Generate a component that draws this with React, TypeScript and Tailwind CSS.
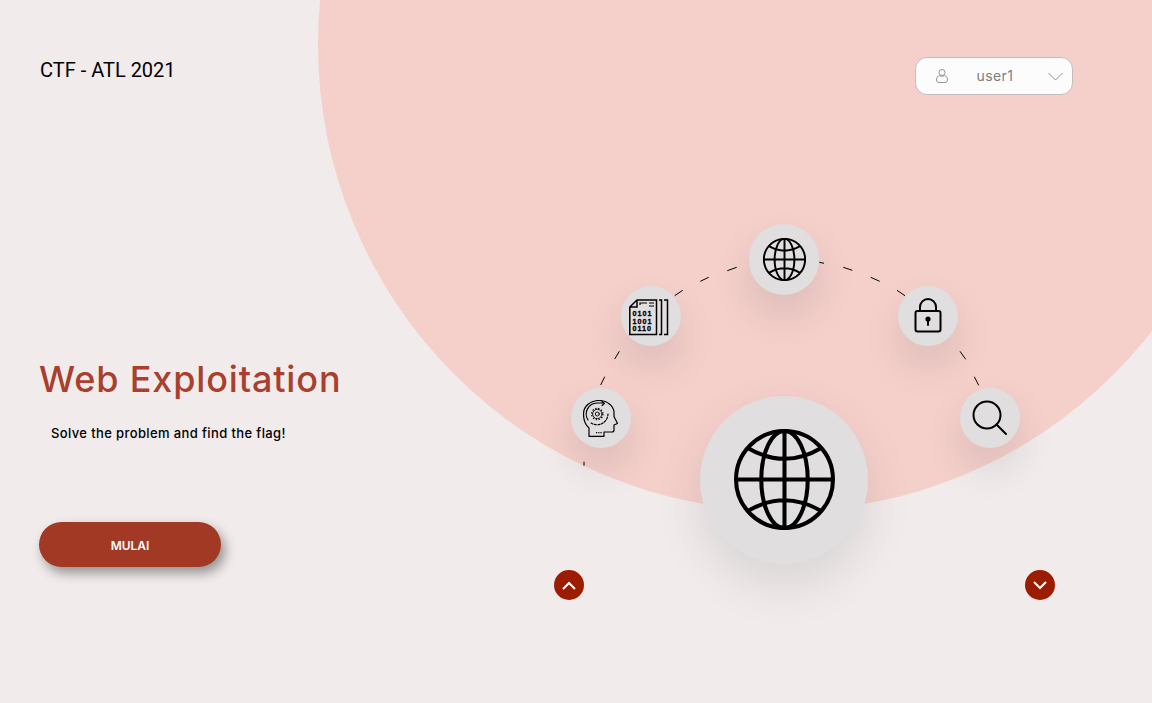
import React from "react";

const Globe = ({ size, sw }: { size: number; sw: number }) => (
  <svg width={size} height={size} viewBox="0 0 100 100" fill="none" stroke="#000" strokeWidth={sw}>
    <circle cx="50" cy="50" r="48" />
    <ellipse cx="50" cy="50" rx="23" ry="48" />
    <path d="M50 2V98M2 50H98M14 19Q50 40 86 19M14 81Q50 60 86 81" />
  </svg>
);

const Lock = () => (
  <svg className="mb-[3px]" width="28" height="36" viewBox="0 0 28 36" fill="none" stroke="#000" strokeWidth="2" strokeLinecap="round" strokeLinejoin="round">
    <rect x="1.500" y="14" width="25" height="20.500" rx="2" />
    <path d="M6 14V10a8 8 0 0 1 16 0V14" />
    <circle cx="14" cy="22" r="1.600" fill="#000" />
    <path d="M14 23V28" />
  </svg>
);

const Search = () => (
  <svg width="36" height="36" viewBox="0 0 36 36" fill="none" stroke="#000" strokeWidth="2" strokeLinecap="round">
    <circle cx="15" cy="15" r="13.500" />
    <path d="M24.500 24.500L34 34" />
  </svg>
);

const Doc = () => (
  <svg className="mr-[5px] mt-[2px]" width="40" height="37" viewBox="0 0 40 37" fill="none" stroke="#000" strokeWidth="1.500">
    <path d="M8 1H27.500V35.500H.800V8Z M8 1V8H.800" />
    <path d="M11 6V4H18M20 4H25M20 7H25" strokeWidth="1.200" />
    <path d="M30 1H32.500V35.500H30M35 1H38.500V35.500H35" />
    <g fill="#000" stroke="#000" strokeWidth="0.300" fontFamily="Liberation Sans, sans-serif" fontSize="7.200" fontWeight="700" letterSpacing="1">
      <text x="3.500" y="17">0101</text>
      <text x="3.500" y="24.600">1001</text>
      <text x="3.500" y="32.200">0110</text>
    </g>
  </svg>
);

const Head = () => (
  <svg width="36" height="37" viewBox="0 0 36 37" fill="none" stroke="#000" strokeWidth="1.200" strokeLinecap="round" strokeLinejoin="round">
    <path d="M6 36.300V28C2.500 25 .500 20 .500 14 .500 6 7.500 .500 16 .500c8 0 14 5 15 11v5l3.500 7-3.500 1.500v5c0 1.500-.7 2-2 2H21v4.300Z" />
    <path d="M5 20A11 11 0 0 1 14 3H21M19 1.500L21.500 3.500 19 5.500" />
    <circle cx="14.300" cy="14" r="2" strokeWidth="0.900" />
    <circle cx="14.300" cy="14" r="4.700" strokeWidth="0.900" />
    <circle cx="14.300" cy="14" r="5.700" strokeDasharray="1.400 1.600" strokeWidth="1.100" strokeLinecap="butt" />
    <path d="M25 14A11 11 0 0 1 8 23" strokeDasharray="2 1.500" />
    <path d="M13 32.700H19.500" strokeDasharray="1.200 1" strokeLinecap="butt" />
  </svg>
);

const Node = ({ x, y, d, children, big }: { x: number; y: number; d: number; children: React.ReactNode; big?: boolean }) => (
  <div
    className={`absolute flex items-center justify-center rounded-full bg-[#e0dede] ${big ? "shadow-[0_20px_50px_rgba(0,0,0,0.1)]" : "shadow-[0_20px_40px_rgba(0,0,0,0.11)]"}`}
    style={{ left: x - d / 2, top: y - d / 2, width: d, height: d }}
  >
    {children}
  </div>
);

const dashes = [
  [584, 461.700, 584, 465.700],
  [600.700, 385, 604.700, 376.700],
  [614.700, 359, 619.300, 351.300],
  [674.700, 295.700, 682.700, 290.300],
  [700.300, 281.300, 708.700, 277.300],
  [727.300, 270.700, 736.700, 267.300],
  [819.300, 262.300, 824, 263.300],
  [843.300, 267.300, 852.300, 270.300],
  [870.700, 277.300, 879.700, 281.300],
  [897, 290.300, 905, 295.700],
  [960, 351.300, 965.700, 359.300],
  [974.300, 376.700, 978.700, 385.300],
];

export default function App() {
  return (
    <div className="relative h-[703px] w-[1152px] overflow-hidden bg-[#f1ebeb] font-['Inter',sans-serif]">
      <div className="absolute left-[318px] top-[-421px] h-[932px] w-[932px] rounded-full bg-[#f5d0cb]" />

      <div className="relative z-10 flex h-full">
        <div className="flex w-[400px] flex-col pl-[39px]">
          <h1 className="mt-[58px] pl-px font-['Roboto',sans-serif] text-[20px] leading-6 text-black">CTF - ATL 2021</h1>
          <h2 className="mt-[270px] whitespace-nowrap text-[36px] font-medium leading-[54px] tracking-[0.85px] text-[#a93f2d]">Web Exploitation</h2>
          <p className="mt-[17px] pl-3 text-[13px] font-medium leading-5 tracking-[0.38px] text-black">Solve the problem and find the flag!</p>
          <button className="mt-[79px] h-[45px] w-[182px] rounded-[23px] bg-[#a23925] pt-[2px] text-[12px] font-semibold text-white shadow-[4px_6px_12px_rgba(0,0,0,0.38)]">MULAI</button>
        </div>

        <div className="flex flex-1 items-start justify-end pr-[79px] pt-[57px]">
          <div className="flex h-[38px] w-[158px] items-center justify-between rounded-xl border border-[#c4bcbc] bg-[#fcfcfc] pl-5 pr-[9px]">
            <svg width="12" height="14" viewBox="0 0 12 14" fill="none" stroke="#8a8a8a" strokeWidth="0.9">
              <circle cx="6" cy="3.500" r="3" />
              <path d="M3.500 6.500C1.500 7 .500 8.500 .500 11c0 1.500 1 2.500 2.500 2.500h6c1.500 0 2.500-1 2.500-2.500 0-2.500-1-4-3-4.500-1.500 1-3 1-5 0Z" />
            </svg>
            <span className="mr-[6px] text-[14px] leading-5 tracking-[0.4px] text-[#7d7d7d]">user1</span>
            <svg width="15" height="9" viewBox="0 0 15 9" fill="none" stroke="#8f8f8f" strokeWidth="1">
              <path d="M.500 1L7.500 8 14.500 1" />
            </svg>
          </div>
        </div>
      </div>

      <svg className="absolute left-0 top-0 z-10" width="1152" height="703" fill="none" stroke="#000" strokeWidth="1">
        {dashes.map((d, i) => (
          <line key={i} x1={d[0]} y1={d[1]} x2={d[2]} y2={d[3]} />
        ))}
      </svg>

      <div className="z-20">
        <Node x={784} y={259.500} d={70.500}><Globe size={43} sw={4.500} /></Node>
        <Node x={651} y={316} d={60}><Doc /></Node>
        <Node x={928} y={316} d={60}><Lock /></Node>
        <Node x={601} y={418} d={60}><Head /></Node>
        <Node x={990} y={418} d={60}><Search /></Node>
        <Node x={784} y={479.500} d={168} big><Globe size={101} sw={4} /></Node>
        <div className="absolute left-[554px] top-[570px] flex h-[30px] w-[30px] items-center justify-center rounded-full bg-[#9c1c00]">
          <svg width="14" height="9" viewBox="0 0 14 9" fill="none" stroke="#fff" strokeWidth="2"><path d="M1 8L7 2 13 8" /></svg>
        </div>
        <div className="absolute left-[1025px] top-[570px] flex h-[30px] w-[30px] items-center justify-center rounded-full bg-[#9c1c00]">
          <svg width="14" height="9" viewBox="0 0 14 9" fill="none" stroke="#fff" strokeWidth="2"><path d="M1 1L7 7 13 1" /></svg>
        </div>
      </div>
    </div>
  );
}
